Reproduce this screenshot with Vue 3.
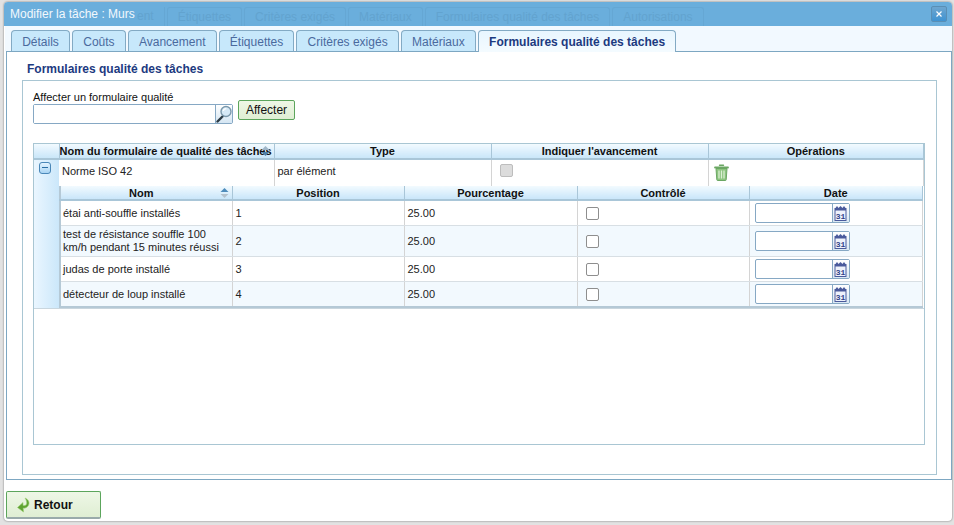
<script setup>
import { ref } from 'vue'

const tabs = ['Détails', 'Coûts', 'Avancement', 'Étiquettes', 'Critères exigés', 'Matériaux', 'Formulaires qualité des tâches']
const ghostTabs = ['Étiquettes', 'Critères exigés', 'Matériaux', 'Formulaires qualité des tâches', 'Autorisations']
const activeTab = ref('Formulaires qualité des tâches')

const rows = [
  { name: 'étai anti-souffle installés', position: 1, percent: '25.00' },
  { name: 'test de résistance souffle 100 km/h pendant 15 minutes réussi', position: 2, percent: '25.00' },
  { name: 'judas de porte installé', position: 3, percent: '25.00' },
  { name: 'détecteur de loup installé', position: 4, percent: '25.00' }
]
</script>

<template>
  <div class="page">
    <div class="window">
      <div class="titlebar">
        <div class="ghost-tabs">
          <span class="ghost-end">ent</span>
          <span v-for="t in ghostTabs" :key="t" class="ghost-tab">{{ t }}</span>
        </div>
        <span class="title">Modifier la tâche : Murs</span>
        <span class="close">
          <svg width="8" height="8" viewBox="0 0 8 8"><path d="M1.5 1.5l5 5M6.5 1.5l-5 5" stroke="#fff" stroke-width="1.2" /></svg>
        </span>
      </div>

      <div class="tabbar">
        <button
          v-for="t in tabs"
          :key="t"
          class="tab"
          :class="{ active: t === activeTab }"
          @click="activeTab = t"
        >{{ t }}</button>
      </div>

      <div class="panel">
        <h3>Formulaires qualité des tâches</h3>
        <div class="fieldset">
          <label class="assign-label">Affecter un formulaire qualité</label>
          <div class="assign-row">
            <div class="combo">
              <input type="text" />
              <span class="search">
                <svg width="16" height="18" viewBox="0 0 16 18">
                  <path d="M1.500 16.500l5-5" stroke="#2c3a44" stroke-width="2.400" stroke-linecap="round" />
                  <circle cx="10" cy="6.500" r="5" fill="#d6e9f6" stroke="#7b98ab" stroke-width="1.400" />
                  <path d="M7.300 6a3 3 0 0 1 3-2.400" stroke="#fff" stroke-width="1.200" fill="none" />
                </svg>
              </span>
            </div>
            <button class="assign-btn">Affecter</button>
          </div>

          <div class="forms-wrap">
            <table class="forms">
              <colgroup>
                <col style="width: 25px" />
                <col style="width: 215px" />
                <col style="width: 217px" />
                <col style="width: 217px" />
                <col />
              </colgroup>
              <thead>
                <tr>
                  <th></th>
                  <th class="sortable">Nom du formulaire de qualité des tâches
                    <svg class="sort ghost" width="9" height="12" viewBox="0 0 9 12"><path d="M4.500 1l4 4h-8z" fill="#9fb6c8" /><path d="M4.500 11l4-4h-8z" fill="#4f7fa5" /></svg>
                  </th>
                  <th>Type</th>
                  <th>Indiquer l'avancement</th>
                  <th>Opérations</th>
                </tr>
              </thead>
              <tbody>
                <tr class="form-row">
                  <td class="expander" rowspan="2">
                    <span class="minus"></span>
                  </td>
                  <td>Norme ISO 42</td>
                  <td>par élément</td>
                  <td><input class="check disabled-check" type="checkbox" disabled /></td>
                  <td class="ops">
                    <svg width="15" height="17" viewBox="0 0 15 17">
                      <path d="M5.500 1.300h4" stroke="#6ba763" stroke-width="1.400" stroke-linecap="round" />
                      <path d="M1 3.500h13" stroke="#6ba763" stroke-width="1.800" stroke-linecap="round" />
                      <path d="M2 4.500h11l-.8 11.200a.8.8 0 0 1-.8.8H3.600a.8.8 0 0 1-.8-.8z" fill="#8cc47f" stroke="#6ba763" />
                      <path d="M5 6.500v8M7.500 6.500v8M10 6.500v8" stroke="#dcf0d4" stroke-width="1.300" />
                    </svg>
                  </td>
                </tr>
                <tr>
                  <td class="nested-cell" colspan="4">
                    <table class="items">
                      <colgroup>
                        <col style="width: 172px" />
                        <col style="width: 172px" />
                        <col style="width: 173px" />
                        <col style="width: 172px" />
                        <col />
                      </colgroup>
                      <thead>
                        <tr>
                          <th class="sortable">Nom
                            <svg class="sort" width="9" height="12" viewBox="0 0 9 12"><path d="M4.500 1l4 4h-8z" fill="#4f8cbb" /><path d="M4.500 11l4-4h-8z" fill="#b4c2cd" /></svg>
                          </th>
                          <th>Position</th>
                          <th>Pourcentage</th>
                          <th>Contrôlé</th>
                          <th>Date</th>
                        </tr>
                      </thead>
                      <tbody>
                        <tr v-for="(row, i) in rows" :key="row.position" :class="{ odd: i % 2 === 1 }">
                          <td class="name">{{ row.name }}</td>
                          <td>{{ row.position }}</td>
                          <td>{{ row.percent }}</td>
                          <td><input class="check" type="checkbox" /></td>
                          <td>
                            <div class="datebox">
                              <input type="text" />
                              <span class="cal">
                                <svg width="13" height="16" viewBox="0 0 13 16">
                                  <path d="M1.500 3l1.500-2 1.500 2 2-2 2 2 1.500-2 1.500 2z" fill="#4a5a9c" />
                                  <rect x="1" y="3.500" width="11" height="12" fill="#eef2fb" stroke="#4a5a9c" />
                                  <rect x="1" y="3" width="11" height="2.500" fill="#4a5a9c" />
                                  <text x="6.500" y="13.500" text-anchor="middle" class="cal-day">31</text>
                                </svg>
                              </span>
                            </div>
                          </td>
                        </tr>
                      </tbody>
                    </table>
                  </td>
                </tr>
              </tbody>
            </table>
          </div>
        </div>
      </div>

      <div class="footer">
        <button class="back">
          <svg width="16" height="16" viewBox="0 0 16 16">
            <path d="M9 1c3.800 1.500 5 5 3.200 7.800-1.200 1.800-3 2.600-5 2.300l.3 3.900L1.500 10.500 7 5.500v3c1.800.3 3-.2 3.500-1.300.6-1.600 0-3.800-1.500-6.200z" fill="#5fa332" stroke="#9ccf73" stroke-width=".6" />
          </svg>
          <span>Retour</span>
        </button>
      </div>
    </div>
  </div>
</template>

<style>
html, body {
  margin: 0;
  height: 100%;
  overflow: hidden;
}
</style>

<style scoped>
.page {
  width: 954px;
  height: 525px;
  background: #e2e2e2;
  padding: 2px 2px 4px 4px;
  box-sizing: border-box;
  font-family: "Liberation Sans", Arial, sans-serif;
  font-size: 11px;
  color: #1a1a1a;
}

.window {
  height: 519px;
  background: #fff;
  border-radius: 4px;
  overflow: hidden;
  box-shadow: 0 0 2px #666;
  display: flex;
  flex-direction: column;
}

.titlebar {
  position: relative;
  height: 24px;
  flex: none;
  background: #6aaedc;
  display: flex;
  align-items: center;
  justify-content: space-between;
  padding: 0 5px 0 6px;
  overflow: hidden;
}

.ghost-tabs {
  position: absolute;
  left: 133px;
  top: 5px;
  display: flex;
  gap: 2px;
  white-space: nowrap;
}

.ghost-end {
  padding-right: 10px;
  line-height: 18px;
  font-size: 12px;
  color: #62a3cf;
  border-right: 1px solid #65a7d4;
}

.ghost-tab {
  padding: 0 10px;
  height: 22px;
  line-height: 18px;
  font-size: 12px;
  color: #62a3cf;
  border: 1px solid #65a7d4;
  border-bottom: none;
  border-radius: 3px 3px 0 0;
}

.title {
  position: relative;
  color: #f2f8fd;
  font-size: 12px;
}

.close {
  position: relative;
  width: 14px;
  height: 14px;
  display: flex;
  align-items: center;
  justify-content: center;
  background: linear-gradient(#6ea6cf, #3f93d2);
  border: 1px solid #5a8fb5;
  border-radius: 2px;
}

.tabbar {
  flex: none;
  height: 25px;
  margin-left: 1px;
  padding: 4px 0 0 6px;
  box-sizing: border-box;
  background: #f2f9ff;
  display: flex;
  gap: 2px;
}

.tab {
  height: 22px;
  padding: 0 10.2px;
  margin: 0;
  border: 1px solid #83aac4;
  border-bottom: none;
  border-radius: 4px 4px 0 0;
  background: #c7e8fb;
  color: #4a6a9e;
  font: 12px "Liberation Sans", Arial, sans-serif;
  cursor: pointer;
}

.tab.active {
  position: relative;
  background: linear-gradient(#e8f6ff, #f4fbff);
  color: #1c3a80;
  font-weight: bold;
}

.panel {
  height: 429px;
  flex: none;
  margin-left: 2px;
  border: 1px solid #7da7c2;
  box-sizing: border-box;
  padding: 0 15px 5px 15px;
  display: flex;
  flex-direction: column;
}

.panel h3 {
  margin: 0;
  padding-left: 5px;
  height: 28px;
  flex: none;
  line-height: 34px;
  font-size: 12px;
  color: #1c3a80;
}

.fieldset {
  width: 915px;
  height: 395px;
  box-sizing: border-box;
  border: 1px solid #a9c6d3;
  padding: 9px 10px 29px 10px;
}

.assign-label {
  display: block;
  height: 14px;
  line-height: 14px;
  color: #111;
}

.assign-row {
  display: flex;
  align-items: flex-start;
  gap: 5px;
  height: 39px;
}

.combo {
  display: flex;
  width: 200px;
  height: 20px;
  box-sizing: border-box;
  border: 1px solid #86a8c4;
  border-radius: 2px;
}

.combo input {
  flex: 1;
  min-width: 0;
  border: none;
  padding: 0;
  outline: none;
}

.search {
  width: 16px;
  flex: none;
  border-left: 1px solid #86a8c4;
  background: linear-gradient(#fff, #d5e6f3);
  display: flex;
}

.assign-btn {
  margin-top: -4px;
  width: 57px;
  height: 20px;
  padding: 0;
  border: 1px solid #5ca55c;
  border-radius: 2px;
  background: linear-gradient(#eef7e6, #dfeed3);
  font: 12px "Liberation Sans", Arial, sans-serif;
  color: #111;
}

table {
  border-collapse: collapse;
  table-layout: fixed;
}

.forms-wrap {
  width: 892px;
  height: 302px;
  box-sizing: border-box;
  border: 1px solid #a9c6d3;
}

.forms {
  width: 890px;
  border-bottom: 1px solid #c9d6de;
}

th {
  height: 14px;
  padding: 0;
  font-size: 11px;
  color: #111;
  text-align: center;
  background: linear-gradient(#f2faff, #c9e6f9);
  border-right: 1px solid #a9c6d8;
  border-bottom: 2px solid #a9c6d8;
  white-space: nowrap;
  position: relative;
  overflow: hidden;
}

.forms > thead th:nth-child(2) {
  text-align: left;
}

.items th {
  height: 13px;
}

.items th.sortable {
  padding-right: 10px;
}

.sort {
  position: absolute;
  right: 3px;
  top: 1px;
}

.sort.ghost {
  right: 4px;
}

.form-row {
  height: 27px;
}

.form-row > td {
  padding: 0 3px 5px;
  border-right: 1px solid #d4d4d4;
  color: #222;
}

.form-row .ops {
  padding: 0 3px 2px 5px;
}

.ops svg {
  display: block;
}

.expander {
  vertical-align: top;
  background: linear-gradient(90deg, #eaf6ff, #cbe7fa);
  padding: 2px 0 0 5px !important;
  border-right: none !important;
}

.minus {
  display: block;
  width: 10px;
  height: 10px;
  border: 1px solid #4a87b8;
  border-radius: 3px;
  background: linear-gradient(#e3f3ff, #a9d4f3);
  position: relative;
}

.minus::after {
  content: "";
  position: absolute;
  left: 2px;
  right: 2px;
  top: 4px;
  height: 1px;
  background: #2c6ea3;
}

.check {
  display: block;
  width: 13px;
  height: 13px;
  margin: 0;
  appearance: none;
  background: #fff;
  border: 1px solid #8e8e8e;
  border-radius: 2px;
}

.form-row .check {
  margin-left: 5px;
}

.disabled-check {
  background: #dcdcdc;
  border-color: #bdbdbd;
}

.nested-cell {
  padding: 0;
  vertical-align: top;
  background: #fff;
}

.items {
  width: 864px;
  border-style: solid;
  border-width: 0 1px 2px 2px;
  border-color: #b5c9d6;
}

.items tbody td {
  padding: 2px 3px;
  height: 20px;
  border-right: 1px solid #d4d4d4;
  border-bottom: 1px solid #d8dfe4;
  color: #222;
  line-height: 13px;
}

.items tbody td:nth-child(4) {
  padding-left: 8px;
}

.items tbody td:nth-child(5) {
  padding-left: 5px;
}

.items tr.odd td {
  background: #f2f9fe;
}

.items .name {
  padding-right: 8px;
  padding-left: 2px;
}

.datebox {
  display: flex;
  width: 95px;
  height: 20px;
  box-sizing: border-box;
  border: 1px solid #86a8c4;
  border-radius: 2px;
  background: #fff;
}

.datebox input {
  flex: 1;
  min-width: 0;
  border: none;
  padding: 0;
  outline: none;
  background: transparent;
}

.cal {
  width: 16px;
  border-left: 1px solid #86a8c4;
  background: linear-gradient(#fff, #d9e8f4);
  display: flex;
  align-items: center;
  justify-content: center;
}

.cal-day {
  font: bold 8px "Liberation Mono", monospace;
  fill: #2f3f88;
}

.footer {
  flex: 1;
  padding: 11px 0 0 2px;
}

.back {
  width: 95px;
  height: 28px;
  padding: 0 0 0 9px;
  display: flex;
  align-items: center;
  gap: 2px;
  border: 1px solid #5ca55c;
  border-bottom: 2px solid #9aa;
  border-radius: 2px;
  background: linear-gradient(#eef7e6, #dfeed3);
  font: bold 12px "Liberation Sans", Arial, sans-serif;
  color: #111;
}
</style>
